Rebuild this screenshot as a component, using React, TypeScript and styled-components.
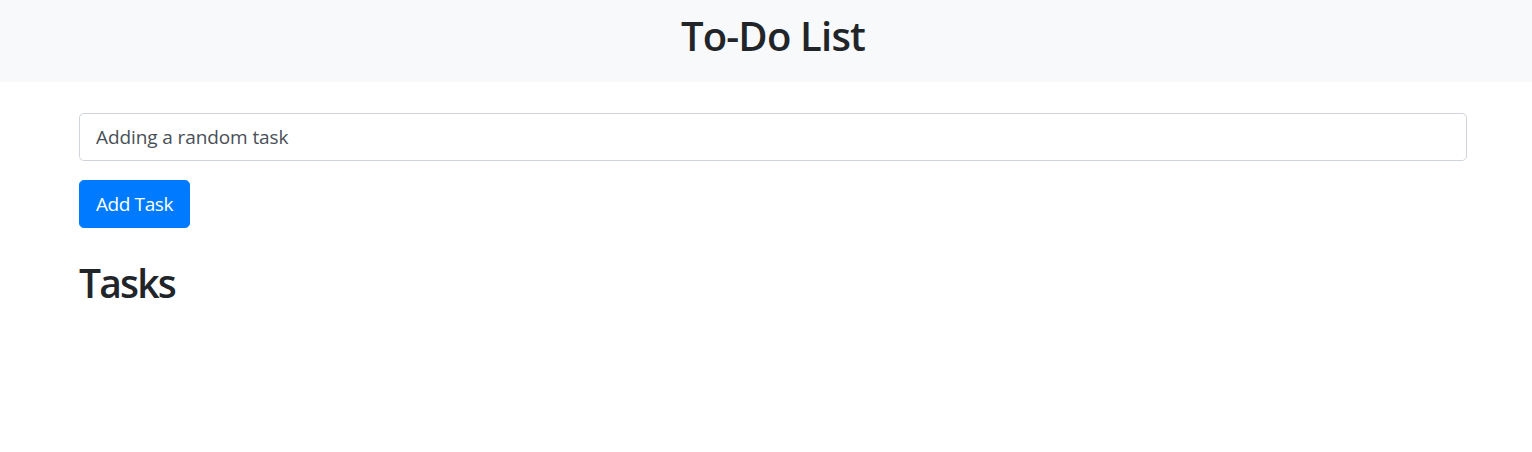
import React, { useState } from 'react';
import styled, { createGlobalStyle } from 'styled-components';

const GlobalStyle = createGlobalStyle`
  * {
    box-sizing: border-box;
  }
  body {
    margin: 0;
    font-family: "Open Sans", "Noto Sans", sans-serif;
    color: #212529;
    background-color: #fff;
  }
`;

const Header = styled.header`
  background-color: #f8f9fa;
  padding: 12px 65px 22px 79px;
  text-align: center;
`;

const Title = styled.h1`
  margin: 0;
  font-size: 40px;
  font-weight: 600;
  line-height: 48px;
  letter-spacing: -0.8px;
  color: #212529;
`;

const Main = styled.main`
  padding: 31px 65px 0 79px;
  display: flex;
  flex-direction: column;
  align-items: flex-start;
`;

const TaskInput = styled.input`
  width: 100%;
  height: 48px;
  padding: 8px 16px;
  font-family: inherit;
  font-size: 19px;
  color: #495057;
  background-color: #fff;
  border: 1px solid #ced4da;
  border-radius: 4.8px;
  outline: none;
  letter-spacing: -0.1px;
`;

const AddButton = styled.button`
  margin-top: 19px;
  height: 48px;
  padding: 8px 16px;
  font-family: inherit;
  font-size: 19px;
  color: #fff;
  background-color: #007bff;
  border: 1px solid #007bff;
  border-radius: 4.8px;
  cursor: pointer;
  letter-spacing: -0.4px;
`;

const SectionTitle = styled.h2`
  margin: 31px 0 0;
  font-size: 39px;
  font-weight: 600;
  line-height: 48px;
  letter-spacing: -1.8px;
  color: #212529;
`;

export default function App() {
  const [task, setTask] = useState('Adding a random task');
  return (
    <>
      <GlobalStyle />
      <Header>
        <Title>To-Do List</Title>
      </Header>
      <Main>
        <TaskInput value={task} onChange={(e) => setTask(e.target.value)} />
        <AddButton>Add Task</AddButton>
        <SectionTitle>Tasks</SectionTitle>
      </Main>
    </>
  );
}
